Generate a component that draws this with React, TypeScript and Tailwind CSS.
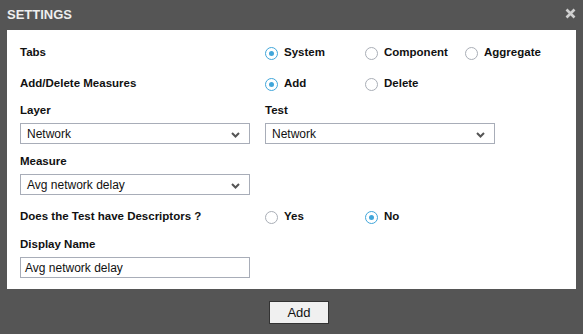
import React from 'react';

const Radio = ({ checked, label, width }: { checked?: boolean; label: string; width: string }) => (
  <label className={`flex items-center ${width}`}>
    <span
      className={`flex h-[13px] w-[13px] items-center justify-center rounded-full border bg-white ${
        checked ? 'border-[#41a6da]' : 'border-[#a9aeb6]'
      }`}
    >
      {checked && <span className="h-[5px] w-[5px] rounded-full bg-[#41a6da]" />}
    </span>
    <span className="ml-[6px] text-[11.5px] font-bold text-[#111]">{label}</span>
  </label>
);

const Chevron = () => (
  <svg width="9" height="6" viewBox="0 0 9 6" className="absolute right-[9px] top-[8px]">
    <path d="M1 1 L4.5 4.5 L8 1" fill="none" stroke="#555" strokeWidth="2" />
  </svg>
);

const Select = ({ value }: { value: string }) => (
  <div className="relative flex h-[21px] w-[230px] items-center border border-[#a8adb8] bg-white pl-[6px] text-[#111]">
    {value}
    <Chevron />
  </div>
);

const Label = ({ children }: { children: React.ReactNode }) => (
  <div className="h-[14px] text-[11.5px] leading-[14px] font-bold text-[#111]">{children}</div>
);

export default function App() {
  return (
    <div
      className="h-[334px] w-[583px] bg-[#555555] text-[12px]"
      style={{ fontFamily: '"Liberation Sans", Arial, sans-serif' }}
    >
      <div className="relative flex h-[30px] items-center px-[7px]">
        <span className="text-[13px] font-bold text-[#eeeeee]">SETTINGS</span>
        <svg width="11" height="11" viewBox="0 0 11 11" className="absolute right-[7px] top-[8px]">
          <path d="M1.5 1.5 L9.5 9.5 M9.5 1.5 L1.5 9.5" stroke="#cfcfcf" strokeWidth="2.6" />
        </svg>
      </div>

      <div className="mx-[7px] w-[569px] bg-white pl-[13px] pt-[13px] pb-[11px]">
        <div className="flex h-[20px] items-center">
          <span className="w-[245px] text-[11.5px] font-bold text-[#111]">Tabs</span>
          <Radio checked label="System" width="w-[100px]" />
          <Radio label="Component" width="w-[100px]" />
          <Radio label="Aggregate" width="w-[100px]" />
        </div>
        <div className="mt-[11px] flex h-[20px] items-center">
          <span className="w-[245px] text-[11.5px] font-bold text-[#111]">Add/Delete Measures</span>
          <Radio checked label="Add" width="w-[100px]" />
          <Radio label="Delete" width="w-[100px]" />
        </div>

        <div className="mt-[9px] flex">
          <div className="w-[245px]">
            <Label>Layer</Label>
            <div className="mt-[6px]">
              <Select value="Network" />
            </div>
          </div>
          <div>
            <Label>Test</Label>
            <div className="mt-[6px]">
              <Select value="Network" />
            </div>
          </div>
        </div>

        <div className="mt-[10px]">
          <Label>Measure</Label>
        </div>
        <div className="mt-[6px]">
          <Select value="Avg network delay" />
        </div>

        <div className="mt-[12px] flex h-[20px] items-center">
          <span className="w-[245px] text-[11.5px] font-bold text-[#111]">Does the Test have Descriptors ?</span>
          <Radio label="Yes" width="w-[100px]" />
          <Radio checked label="No" width="w-[100px]" />
        </div>

        <div className="mt-[10px]">
          <Label>Display Name</Label>
        </div>
        <div className="mt-[6px] flex h-[21px] w-[230px] items-center border border-[#a8adb8] bg-white pl-[4px] text-[#111]">
          Avg network delay
        </div>
      </div>

      <div className="flex justify-center pt-[12px]">
        <button className="ml-[15px] h-[23px] w-[60px] border border-[#333] bg-[#f0f0f0] text-[13px] text-[#111]">
          Add
        </button>
      </div>
    </div>
  );
}
